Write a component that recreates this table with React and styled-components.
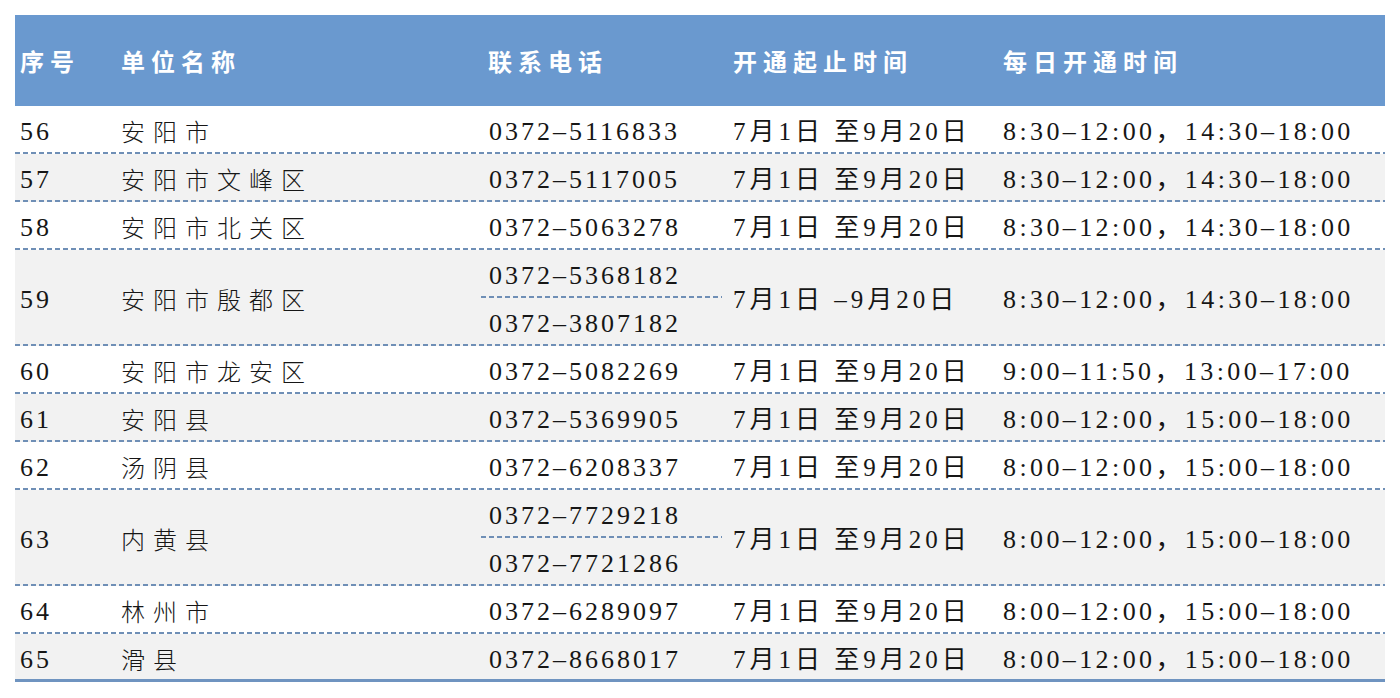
import React from "react";
import styled, { createGlobalStyle } from "styled-components";

const GlobalStyle = createGlobalStyle`
  html, body {
    margin: 0;
    padding: 0;
    background: #ffffff;
  }
  body {
    font-family: "Liberation Serif", "Noto Sans CJK SC", serif;
    color: #161616;
  }
`;

const COLS = "100px 366px 241px 268px 395px";
const DASH = "repeating-linear-gradient(to right, #6f8fb6 0 5px, transparent 5px 8px)";

const Table = styled.div`
  margin: 15px 0 0 15px;
  width: 1370px;
`;

const HeaderRow = styled.div`
  display: grid;
  grid-template-columns: ${COLS};
  height: 91px;
  background: #6a99cf;
`;

const HeaderCell = styled.div`
  display: flex;
  align-items: center;
  padding: 0 0 0 ${(p) => p.$pad}px;
  font-family: "Noto Sans CJK SC", sans-serif;
  font-weight: 700;
  font-size: 24px;
  letter-spacing: 6px;
  color: #ffffff;
  white-space: nowrap;
`;

const Row = styled.div`
  display: grid;
  grid-template-columns: ${COLS};
  height: ${(p) => (p.$double ? 96 : 48)}px;
  background: ${(p) =>
      p.$last
        ? "linear-gradient(#6f94c0, #6f94c0) left bottom / 100% 3px no-repeat"
        : `${DASH} left bottom / 100% 2px no-repeat`},
    ${(p) => (p.$alt ? "#f2f2f2" : "#ffffff")};
`;

const Cell = styled.div`
  display: flex;
  align-items: center;
  padding: 3px 0 0 ${(p) => p.$pad}px;
  font-size: 26px;
  letter-spacing: ${(p) => p.$ls ?? 3}px;
  white-space: nowrap;
  line-height: 1;
`;

const NameCell = styled(Cell)`
  font-family: "Noto Sans CJK SC", serif;
  font-weight: 300;
  font-size: 24px;
  letter-spacing: 8px;
  padding-top: 2px;
`;

const DateCell = styled(Cell)`
  font-size: 25px;
  letter-spacing: 4px;
`;

const PhoneStack = styled.div`
  display: flex;
  flex-direction: column;
`;

const PhoneLine = styled.div`
  display: flex;
  align-items: center;
  height: 48px;
  padding: 3px 0 0 8px;
  box-sizing: border-box;
  font-size: 26px;
  letter-spacing: 3px;
  line-height: 1;
  white-space: nowrap;
  background: ${(p) => (p.$divider ? `${DASH} left bottom / 100% 2px no-repeat` : "none")};
`;

const rows = [
  { no: "56", name: "安阳市", phones: ["0372–5116833"], date: "7月1日 至9月20日", time: "8:30–12:00，14:30–18:00" },
  { no: "57", name: "安阳市文峰区", phones: ["0372–5117005"], date: "7月1日 至9月20日", time: "8:30–12:00，14:30–18:00" },
  { no: "58", name: "安阳市北关区", phones: ["0372–5063278"], date: "7月1日 至9月20日", time: "8:30–12:00，14:30–18:00" },
  { no: "59", name: "安阳市殷都区", phones: ["0372–5368182", "0372–3807182"], date: "7月1日 –9月20日", time: "8:30–12:00，14:30–18:00" },
  { no: "60", name: "安阳市龙安区", phones: ["0372–5082269"], date: "7月1日 至9月20日", time: "9:00–11:50，13:00–17:00" },
  { no: "61", name: "安阳县", phones: ["0372–5369905"], date: "7月1日 至9月20日", time: "8:00–12:00，15:00–18:00" },
  { no: "62", name: "汤阴县", phones: ["0372–6208337"], date: "7月1日 至9月20日", time: "8:00–12:00，15:00–18:00" },
  { no: "63", name: "内黄县", phones: ["0372–7729218", "0372–7721286"], date: "7月1日 至9月20日", time: "8:00–12:00，15:00–18:00" },
  { no: "64", name: "林州市", phones: ["0372–6289097"], date: "7月1日 至9月20日", time: "8:00–12:00，15:00–18:00" },
  { no: "65", name: "滑县", phones: ["0372–8668017"], date: "7月1日 至9月20日", time: "8:00–12:00，15:00–18:00" },
];

export default function App() {
  return (
    <>
      <GlobalStyle />
      <Table>
        <HeaderRow>
          <HeaderCell $pad={5}>序号</HeaderCell>
          <HeaderCell $pad={6}>单位名称</HeaderCell>
          <HeaderCell $pad={7}>联系电话</HeaderCell>
          <HeaderCell $pad={11}>开通起止时间</HeaderCell>
          <HeaderCell $pad={13}>每日开通时间</HeaderCell>
        </HeaderRow>
        {rows.map((r, i) => {
          const double = r.phones.length > 1;
          return (
            <Row key={r.no} $double={double} $alt={i % 2 === 1} $last={i === rows.length - 1}>
              <Cell $pad={5}>{r.no}</Cell>
              <NameCell $pad={6}>{r.name}</NameCell>
              {double ? (
                <PhoneStack>
                  {r.phones.map((p, j) => (
                    <PhoneLine key={p} $divider={j === 0}>
                      {p}
                    </PhoneLine>
                  ))}
                </PhoneStack>
              ) : (
                <Cell $pad={8}>{r.phones[0]}</Cell>
              )}
              <DateCell $pad={11}>{r.date}</DateCell>
              <Cell $pad={13} $ls={3.4}>{r.time}</Cell>
            </Row>
          );
        })}
      </Table>
    </>
  );
}
